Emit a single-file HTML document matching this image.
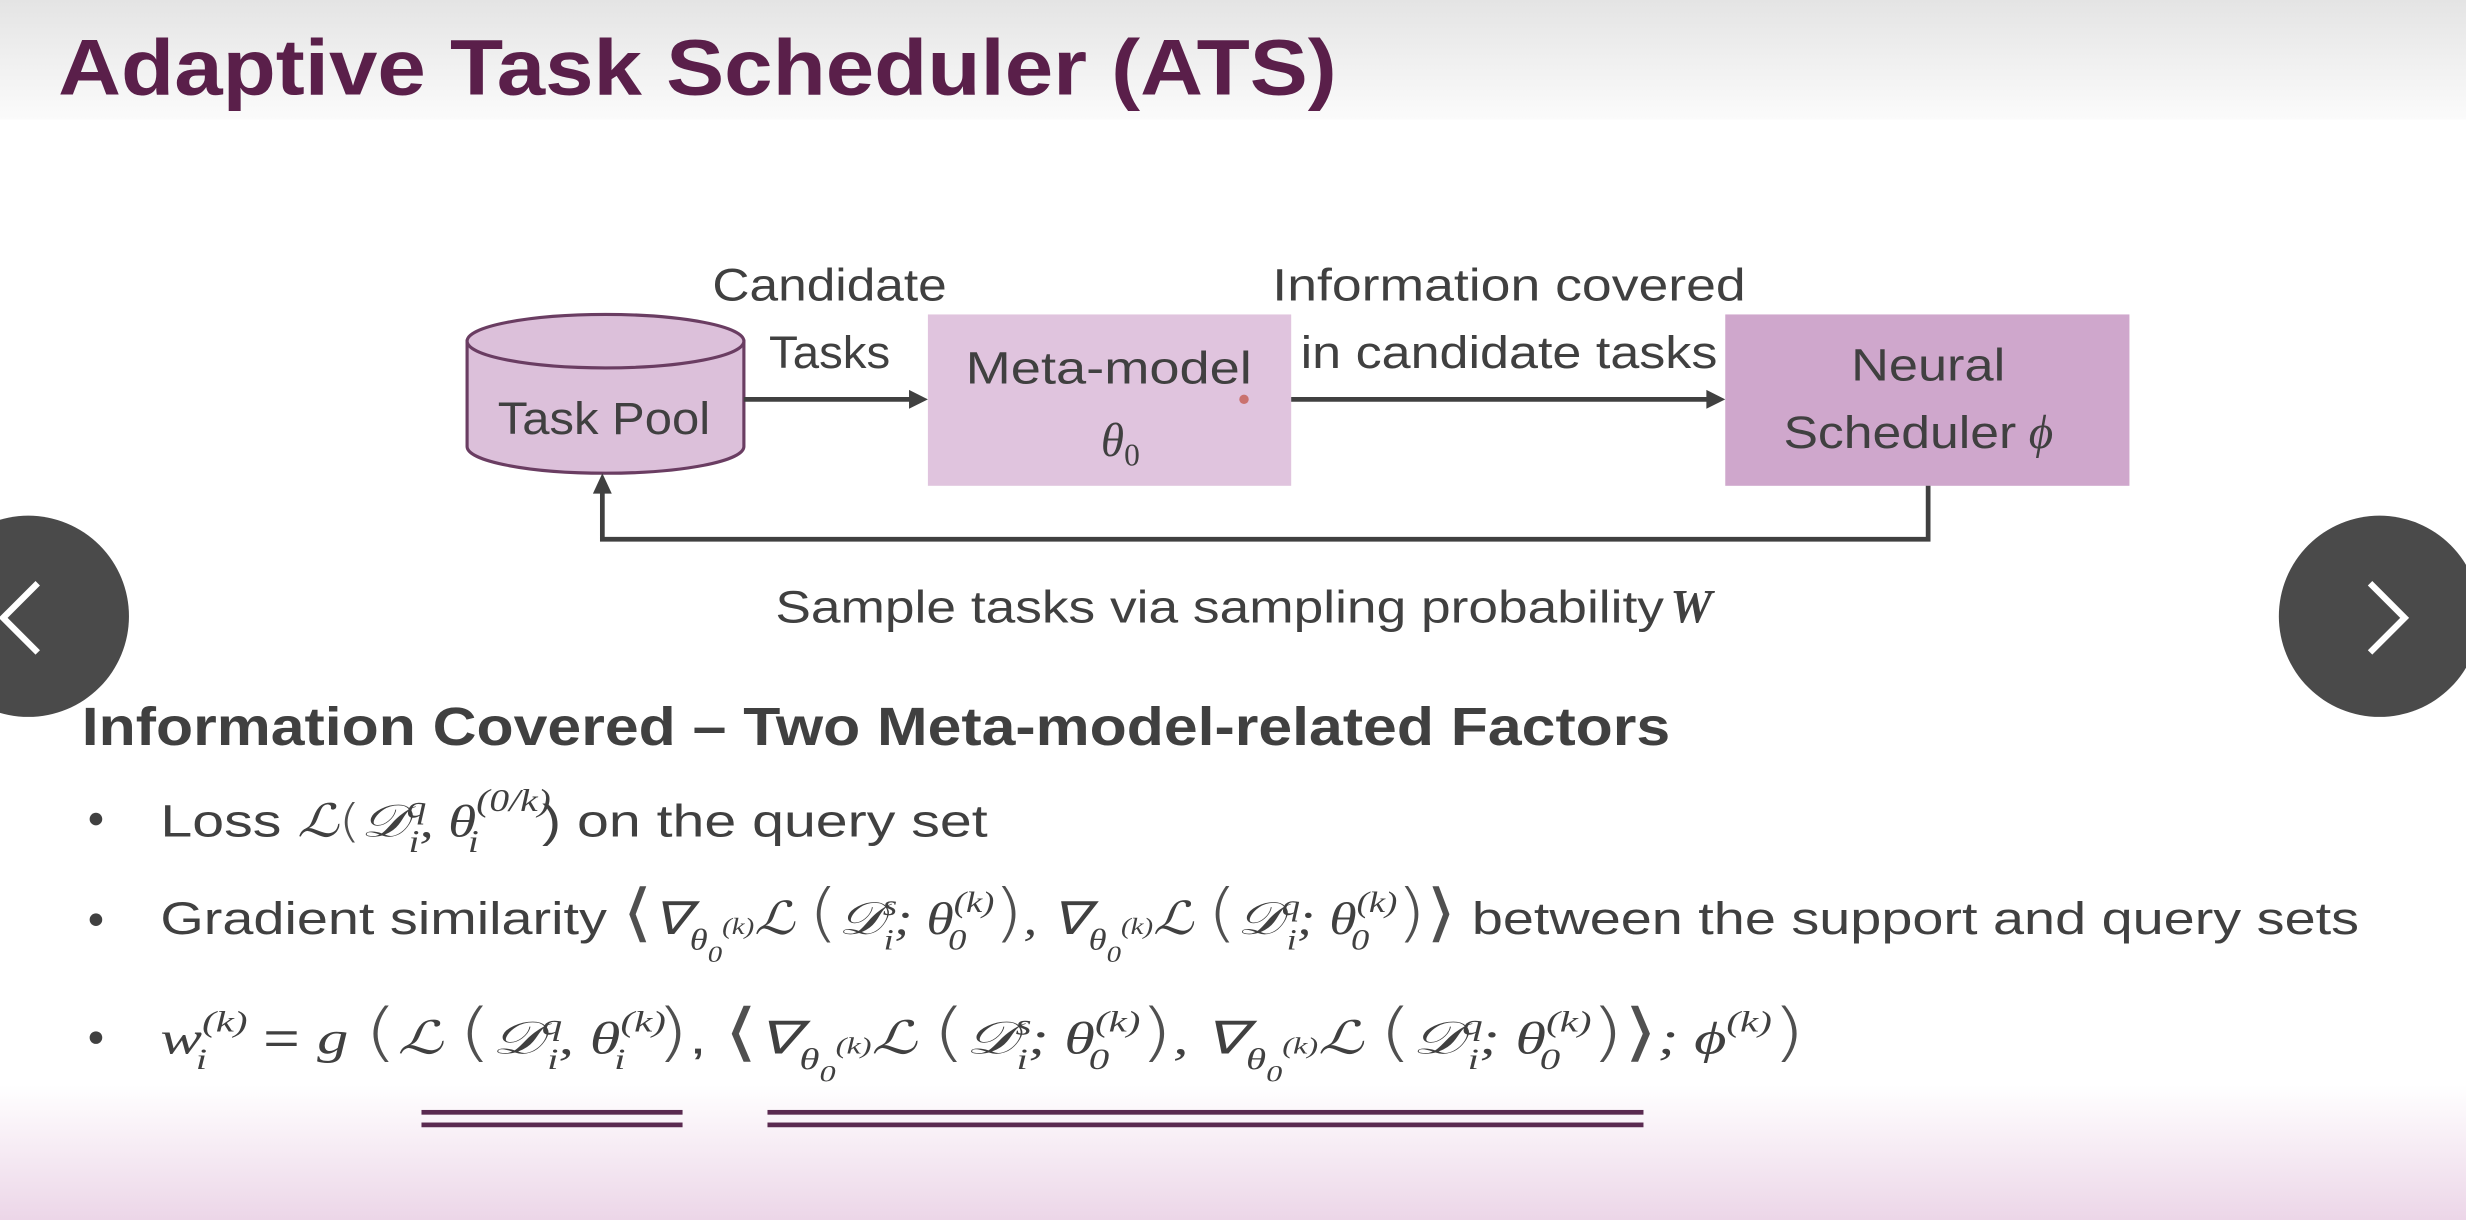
<!DOCTYPE html>
<html><head><meta charset="utf-8"><style>
html,body{margin:0;padding:0;background:#fff;overflow:hidden}
svg{display:block}
.t{font-family:"Liberation Sans",sans-serif;fill:#404040}
.m{font-family:"Liberation Serif",serif;font-style:italic}
.p{font-family:"DejaVu Sans",sans-serif;font-style:normal;font-weight:200;fill:#505050}
</style></head><body>
<svg width="2466" height="1220" viewBox="0 0 1568 776" preserveAspectRatio="none" xmlns="http://www.w3.org/2000/svg">
<defs>
<linearGradient id="top" x1="0" y1="0" x2="0" y2="1"><stop offset="0" stop-color="#e4e4e4"/><stop offset="1" stop-color="#fbfbfb"/></linearGradient>
<linearGradient id="bot" x1="0" y1="0" x2="0" y2="1"><stop offset="0" stop-color="#ffffff"/><stop offset="1" stop-color="#ecd6e8"/></linearGradient>
</defs>
<rect width="1568" height="776" fill="#fff"/>
<rect width="1568" height="76" fill="url(#top)"/>
<rect y="690" width="1568" height="86" fill="url(#bot)"/>
<text x="37" y="60" class="t" style="font-weight:bold;fill:#5a1f4a" font-size="50" textLength="813" lengthAdjust="spacingAndGlyphs">Adaptive Task Scheduler (ATS)</text>

<path d="M297,217 L297,284 A88,17 0 0 0 473,284 L473,217 Z" fill="#dcc0da" stroke="#6a3d62" stroke-width="2"/>
<ellipse cx="385" cy="217" rx="88" ry="17" fill="#dcc0da" stroke="#6a3d62" stroke-width="2"/>
<text x="384" y="276" class="t" font-size="29" text-anchor="middle" textLength="135" lengthAdjust="spacingAndGlyphs">Task Pool</text>

<rect x="590" y="200" width="231" height="109" fill="#e0c4de"/>
<text x="705" y="244" class="t" font-size="29" text-anchor="middle" textLength="182" lengthAdjust="spacingAndGlyphs">Meta-model</text>
<text x="700" y="290" class="t m" font-size="30">θ<tspan font-size="20" dy="6" font-style="normal">0</tspan></text>
<circle cx="791" cy="254" r="3" fill="#c05040" opacity="0.7"/>

<rect x="1097" y="200" width="257" height="109" fill="#cfa7cc"/>
<text x="1226" y="242" class="t" font-size="29" text-anchor="middle" textLength="98" lengthAdjust="spacingAndGlyphs">Neural</text>
<text x="1134" y="285" class="t" font-size="29" textLength="148" lengthAdjust="spacingAndGlyphs">Scheduler</text>
<text x="1290" y="285" class="t m" font-size="30">ϕ</text>

<text x="453" y="191" class="t" font-size="29" textLength="149" lengthAdjust="spacingAndGlyphs">Candidate</text>
<text x="489" y="234" class="t" font-size="29" textLength="77" lengthAdjust="spacingAndGlyphs">Tasks</text>
<text x="809" y="191" class="t" font-size="29" textLength="301" lengthAdjust="spacingAndGlyphs">Information covered</text>
<text x="827" y="234" class="t" font-size="29" textLength="265" lengthAdjust="spacingAndGlyphs">in candidate tasks</text>

<g stroke="#404040" stroke-width="3" fill="none">
<line x1="473" y1="254" x2="580" y2="254"/>
<line x1="821" y1="254" x2="1087" y2="254"/>
<polyline points="1226,309 1226,343 383,343 383,312"/>
</g>
<polygon points="590,254 578,248 578,260" fill="#404040"/>
<polygon points="1097,254 1085,248 1085,260" fill="#404040"/>
<polygon points="383,301 377,314 389,314" fill="#404040"/>

<text x="493" y="396" class="t" font-size="29" textLength="565" lengthAdjust="spacingAndGlyphs">Sample tasks via sampling probability</text>
<text x="1062" y="396" class="t m" font-size="30" font-weight="bold">W</text>

<circle cx="18" cy="392" r="64" fill="#4a4a4a"/>
<polyline points="24,371 2,393 24,415" stroke="#fff" stroke-width="4" fill="none"/>
<circle cx="1513" cy="392" r="64" fill="#4a4a4a"/>
<polyline points="1507,371 1529,393 1507,415" stroke="#fff" stroke-width="4" fill="none"/>

<text x="52" y="474" class="t" font-size="34" font-weight="bold" textLength="1010" lengthAdjust="spacingAndGlyphs">Information Covered – Two Meta-model-related Factors</text>

<g fill="#404040"><circle cx="61" cy="521" r="4"/><circle cx="61" cy="585" r="4"/><circle cx="61" cy="660" r="4"/></g>

<text x="102" y="532" class="t" font-size="29" textLength="526" lengthAdjust="spacingAndGlyphs">Loss <tspan class="m">ℒ</tspan><tspan class="p">(</tspan><tspan class="m">𝒟</tspan><tspan class="m" font-size="20" dy="-12">q</tspan><tspan class="m" font-size="20" dx="-9" dy="22">i</tspan><tspan class="m" dy="-10">, θ</tspan><tspan class="m" font-size="20" dy="-16">(0/k)</tspan><tspan dx="-42" dy="26" class="m" font-size="20">i</tspan><tspan dx="32" dy="-10">) on the query set</tspan></text>

<text x="102" y="594" class="t" font-size="29" textLength="1398" lengthAdjust="spacingAndGlyphs">Gradient similarity <tspan class="p" font-size="40">⟨</tspan><tspan class="m">∇</tspan><tspan class="m" font-size="19" dy="10">θ</tspan><tspan class="m" font-size="15" dy="8">0</tspan><tspan class="m" font-size="15" dy="-18">(k)</tspan><tspan class="m" dy="0">ℒ </tspan><tspan class="p" font-size="40">(</tspan><tspan class="m">𝒟</tspan><tspan class="m" font-size="19" dy="-12">s</tspan><tspan class="m" font-size="19" dy="22" dx="-7">i</tspan><tspan class="m" dy="-10">; θ</tspan><tspan class="m" font-size="19" dy="-14">(k)</tspan><tspan class="m" font-size="19" dy="24" dx="-24">0</tspan><tspan class="p" font-size="40" dy="-10" dx="14">)</tspan><tspan class="m">, ∇</tspan><tspan class="m" font-size="19" dy="10">θ</tspan><tspan class="m" font-size="15" dy="8">0</tspan><tspan class="m" font-size="15" dy="-18">(k)</tspan><tspan class="m">ℒ </tspan><tspan class="p" font-size="40">(</tspan><tspan class="m">𝒟</tspan><tspan class="m" font-size="19" dy="-12">q</tspan><tspan class="m" font-size="19" dy="22" dx="-7">i</tspan><tspan class="m" dy="-10">; θ</tspan><tspan class="m" font-size="19" dy="-14">(k)</tspan><tspan class="m" font-size="19" dy="24" dx="-24">0</tspan><tspan class="p" font-size="40" dy="-10" dx="14">)⟩</tspan> between the support and query sets</text>

<text x="102" y="670" class="t" font-size="29" textLength="1046" lengthAdjust="spacingAndGlyphs"><tspan class="m">w</tspan><tspan class="m" font-size="19" dy="-14">(k)</tspan><tspan class="m" font-size="19" dy="24" dx="-24">i</tspan><tspan dy="-10" dx="18"> = </tspan><tspan class="m">g </tspan><tspan class="p" font-size="40">(</tspan><tspan class="m">ℒ </tspan><tspan class="p" font-size="40">(</tspan><tspan class="m">𝒟</tspan><tspan class="m" font-size="19" dy="-12">q</tspan><tspan class="m" font-size="19" dy="22" dx="-7">i</tspan><tspan class="m" dy="-10">, θ</tspan><tspan class="m" font-size="19" dy="-14">(k)</tspan><tspan class="m" font-size="19" dy="24" dx="-24">i</tspan><tspan class="p" font-size="40" dy="-10" dx="14">)</tspan><tspan>, </tspan><tspan class="p" font-size="40">⟨</tspan><tspan class="m">∇</tspan><tspan class="m" font-size="19" dy="10">θ</tspan><tspan class="m" font-size="15" dy="8">0</tspan><tspan class="m" font-size="15" dy="-18">(k)</tspan><tspan class="m">ℒ </tspan><tspan class="p" font-size="40">(</tspan><tspan class="m">𝒟</tspan><tspan class="m" font-size="19" dy="-12">s</tspan><tspan class="m" font-size="19" dy="22" dx="-7">i</tspan><tspan class="m" dy="-10">; θ</tspan><tspan class="m" font-size="19" dy="-14">(k)</tspan><tspan class="m" font-size="19" dy="24" dx="-24">0</tspan><tspan class="p" font-size="40" dy="-10" dx="14">)</tspan><tspan class="m">, ∇</tspan><tspan class="m" font-size="19" dy="10">θ</tspan><tspan class="m" font-size="15" dy="8">0</tspan><tspan class="m" font-size="15" dy="-18">(k)</tspan><tspan class="m">ℒ </tspan><tspan class="p" font-size="40">(</tspan><tspan class="m">𝒟</tspan><tspan class="m" font-size="19" dy="-12">q</tspan><tspan class="m" font-size="19" dy="22" dx="-7">i</tspan><tspan class="m" dy="-10">; θ</tspan><tspan class="m" font-size="19" dy="-14">(k)</tspan><tspan class="m" font-size="19" dy="24" dx="-24">0</tspan><tspan class="p" font-size="40" dy="-10" dx="14">)⟩</tspan><tspan class="m">; ϕ</tspan><tspan class="m" font-size="19" dy="-14">(k)</tspan><tspan class="p" font-size="40" dy="14">)</tspan></text>

<g fill="#5a2a50">
<rect x="268" y="706" width="166" height="3"/><rect x="268" y="714" width="166" height="3"/>
<rect x="488" y="706" width="557" height="3"/><rect x="488" y="714" width="557" height="3"/>
</g>
</svg>
</body></html>
